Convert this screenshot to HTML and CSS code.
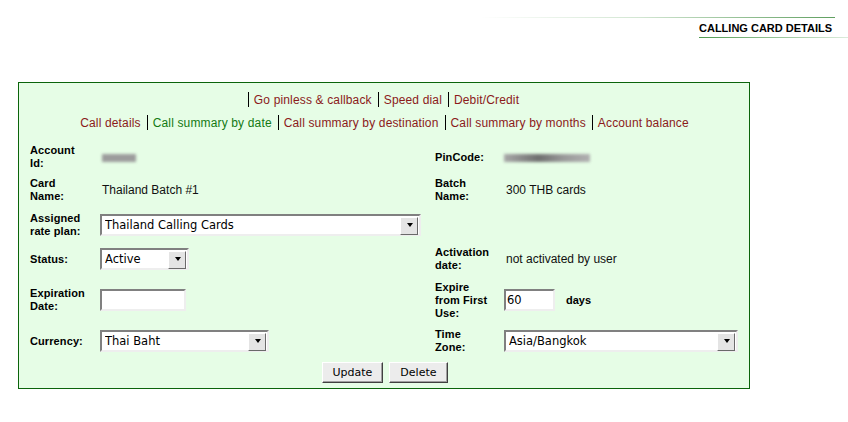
FILE: index.html
```html
<!DOCTYPE html>
<html>
<head>
    <meta charset="UTF-8">
    <title>Calling Card Details</title>
    <link rel="stylesheet" href="styles.css">
</head>
<body>
    <div class="page-head">
        <div class="head-rule"></div>
        <h2 class="head-title">CALLING CARD DETAILS</h2>
    </div>

    <div class="card-box">
        <div class="nav-row nav-top">
            <span class="sep"></span><a class="nav-link" href="#">Go pinless &amp; callback</a><span class="sep"></span><a class="nav-link" href="#">Speed dial</a><span class="sep"></span><a class="nav-link" href="#">Debit/Credit</a>
        </div>
        <div class="nav-row">
            <a class="nav-link" href="#">Call details</a><span class="sep"></span><a class="nav-link current" href="#">Call summary by date</a><span class="sep"></span><a class="nav-link" href="#">Call summary by destination</a><span class="sep"></span><a class="nav-link" href="#">Call summary by months</a><span class="sep"></span><a class="nav-link" href="#">Account balance</a>
        </div>

        <form class="detail-grid">
            <div class="field-label">Account Id:</div>
            <div class="field-value"><span class="masked masked-short"></span></div>
            <div class="field-label">PinCode:</div>
            <div class="field-value"><span class="masked masked-long"></span></div>

            <div class="field-label">Card Name:</div>
            <div class="field-value">Thailand Batch #1</div>
            <div class="field-label">Batch Name:</div>
            <div class="field-value">300 THB cards</div>

            <div class="field-label">Assigned rate plan:</div>
            <div class="field-control">
                <span class="select-box"><select class="w-plan"><option>Thailand Calling Cards</option></select></span>
            </div>
            <div></div>
            <div></div>

            <div class="field-label">Status:</div>
            <div class="field-control">
                <span class="select-box"><select class="w-status"><option>Active</option></select></span>
            </div>
            <div class="field-label">Activation date:</div>
            <div class="field-value">not activated by user</div>

            <div class="field-label">Expiration Date:</div>
            <div class="field-control"><input class="text-input w-date" type="text"></div>
            <div class="field-label">Expire from First Use:</div>
            <div class="field-control">
                <input class="text-input w-days" type="text" value="60">
                <span class="days">days</span>
            </div>

            <div class="field-label">Currency:</div>
            <div class="field-control">
                <span class="select-box"><select class="w-currency"><option>Thai Baht</option></select></span>
            </div>
            <div class="field-label">Time Zone:</div>
            <div class="field-control">
                <span class="select-box"><select class="w-zone"><option>Asia/Bangkok</option></select></span>
            </div>
        </form>

        <div class="actions">
            <button class="btn" type="button">Update</button>
            <button class="btn" type="button">Delete</button>
        </div>
    </div>
</body>
</html>
```

FILE: styles.css
```css
* {
    margin: 0;
    padding: 0;
    box-sizing: border-box;
}

body {
    font-family: "Liberation Sans", Arial, sans-serif;
    background: #fff;
    color: #000;
}

/* header */
.page-head {
    padding-top: 17px;
    display: flex;
    flex-direction: column;
    align-items: flex-end;
}

.head-rule {
    width: 355px;
    height: 1px;
    margin-right: 13px;
    background: linear-gradient(to right, #fff, #d2e6d2 45%, #5f9f5f);
}

.head-title {
    width: 149px;
    font-size: 11px;
    font-weight: bold;
    line-height: 14px;
    padding: 3px 0;
    background: linear-gradient(to right, #4e9a4e, #dcecdc) left bottom / 100% 1px no-repeat;
}

/* main box */
.card-box {
    width: 732px;
    margin: 44px 0 0 18px;
    padding: 9px 10px 5px 11px;
    border: 1px solid #0b640b;
    background: #e6fde6;
}

.nav-row {
    text-align: center;
    font-size: 12px;
    line-height: 16px;
    letter-spacing: 0.15px;
}

.nav-top {
    padding-right: 8px;
}

.nav-row + .nav-row {
    margin-top: 7px;
}

.nav-link {
    color: #8b1a1a;
    text-decoration: none;
}

.nav-link.current {
    color: #137a13;
}

.sep {
    display: inline-block;
    width: 1px;
    height: 15px;
    margin: 0 5px 0 6px;
    background: #000;
    vertical-align: -3px;
}

/* form grid */
.detail-grid {
    display: grid;
    grid-template-columns: 70px 335px 69px 1fr;
    grid-template-rows: 32px 34px 36px 32px 50px 32px;
    align-items: center;
    margin-top: 10px;
}

.field-label {
    width: 57px;
    font-size: 11px;
    font-weight: bold;
    line-height: 13px;
    letter-spacing: 0.1px;
}

.field-value {
    padding-left: 2px;
    font-size: 12px;
    color: #111;
}

.field-control {
    display: flex;
    align-items: center;
}

.masked {
    display: inline-block;
    height: 8px;
    vertical-align: middle;
    filter: blur(1.5px);
}

.masked-short {
    width: 34px;
    background: #9c9c9c;
}

.masked-long {
    width: 86px;
    margin-left: -2px;
    background: linear-gradient(to right, #a8a8a8, #6f6f6f 40%, #9a9a9a 70%, #b0b0b0);
}

/* classic controls */
.select-box {
    position: relative;
    display: inline-block;
}

.select-box select {
    display: block;
    height: 22px;
    padding: 0 20px 0 3px;
    border: 2px solid;
    border-color: #808080 #eeeeee #eeeeee #808080;
    border-radius: 0;
    background: #fff;
    color: #000;
    font: 11.5px "DejaVu Sans", sans-serif;
    appearance: none;
    -webkit-appearance: none;
}

.select-box::after {
    content: "";
    position: absolute;
    top: 3px;
    right: 3px;
    width: 16px;
    height: 16px;
    border: 1px solid;
    border-color: #ffffff #6a6a6a #6a6a6a #ffffff;
    background: #e4e4e4;
    pointer-events: none;
}

.select-box::before {
    content: "";
    position: absolute;
    z-index: 1;
    top: 9px;
    right: 8px;
    width: 0;
    height: 0;
    border-left: 3px solid transparent;
    border-right: 3px solid transparent;
    border-top: 4px solid #000;
    pointer-events: none;
}

.w-plan { width: 321px; }
.w-status { width: 89px; }
.w-currency { width: 169px; }
.w-zone { width: 234px; }

.text-input {
    height: 22px;
    padding: 0 1px;
    border: 2px solid;
    border-color: #808080 #eeeeee #eeeeee #808080;
    background: #fff;
    font: 11.5px "DejaVu Sans", sans-serif;
}

.w-date { width: 86px; }
.w-days { width: 51px; }

.days {
    margin-left: 11px;
    font-size: 11px;
    font-weight: bold;
}

.actions {
    display: flex;
    justify-content: center;
    gap: 6px;
    margin-top: 5px;
}

.btn {
    height: 21px;
    padding: 0 10px;
    border: 1px solid;
    border-color: #ffffff #404040 #404040 #ffffff;
    box-shadow: inset -1px -1px #a0a0a0;
    background: #ececec;
    color: #000;
    font: 11px "DejaVu Sans", sans-serif;
}
```
